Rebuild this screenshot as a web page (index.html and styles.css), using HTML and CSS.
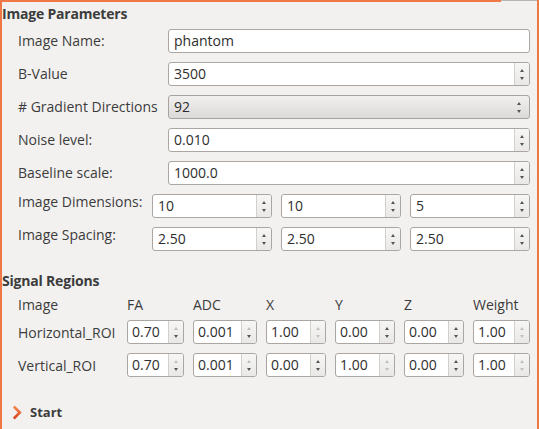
FILE: index.html
```html
<!DOCTYPE html>
<html>
<head>
<meta charset="utf-8">
<link rel="stylesheet" href="styles.css">
</head>
<body>
<div class="frame">
  <div class="topline"><span class="top-orange"></span><span class="top-gray"></span></div>
  <div class="content">
    <div class="section-title first">Image Parameters</div>
    <div class="form">
      <div class="row">
        <div class="lbl">Image Name:</div>
        <div class="field"><span class="val">phantom</span></div>
      </div>
      <div class="row">
        <div class="lbl">B-Value</div>
        <div class="field"><span class="val">3500</span><span class="btns"><i class="up"></i><i class="dn"></i></span></div>
      </div>
      <div class="row">
        <div class="lbl">#&nbsp;Gradient Directions</div>
        <div class="field combo"><span class="val">92</span><span class="cbtns"><i class="up"></i><i class="dn"></i></span></div>
      </div>
      <div class="row">
        <div class="lbl">Noise level:</div>
        <div class="field"><span class="val">0.010</span><span class="btns"><i class="up"></i><i class="dn"></i></span></div>
      </div>
      <div class="row">
        <div class="lbl">Baseline scale:</div>
        <div class="field"><span class="val">1000.0</span><span class="btns"><i class="up"></i><i class="dn"></i></span></div>
      </div>
      <div class="row triple">
        <div class="lbl top">Image Dimensions:</div>
        <div class="field"><span class="val">10</span><span class="btns"><i class="up"></i><i class="dn"></i></span></div>
        <div class="field"><span class="val">10</span><span class="btns"><i class="up"></i><i class="dn"></i></span></div>
        <div class="field"><span class="val">5</span><span class="btns"><i class="up"></i><i class="dn"></i></span></div>
      </div>
      <div class="row triple">
        <div class="lbl top">Image Spacing:</div>
        <div class="field"><span class="val">2.50</span><span class="btns"><i class="up"></i><i class="dn"></i></span></div>
        <div class="field"><span class="val">2.50</span><span class="btns"><i class="up"></i><i class="dn"></i></span></div>
        <div class="field"><span class="val">2.50</span><span class="btns"><i class="up"></i><i class="dn"></i></span></div>
      </div>
    </div>

    <div class="section-title second">Signal Regions</div>
    <div class="regions">
      <div class="grid head">
        <div>Image</div><div>FA</div><div>ADC</div><div>X</div><div>Y</div><div>Z</div><div>Weight</div>
      </div>
      <div class="grid">
        <div class="rlbl">Horizontal_ROI</div>
        <div class="field sm"><span class="val">0.70</span><span class="btns"><i class="up off"></i><i class="dn"></i></span></div>
        <div class="field sm"><span class="val">0.001</span><span class="btns"><i class="up off"></i><i class="dn"></i></span></div>
        <div class="field sm"><span class="val">1.00</span><span class="btns"><i class="up off"></i><i class="dn off"></i></span></div>
        <div class="field sm"><span class="val">0.00</span><span class="btns"><i class="up"></i><i class="dn"></i></span></div>
        <div class="field sm"><span class="val">0.00</span><span class="btns"><i class="up"></i><i class="dn"></i></span></div>
        <div class="field sm"><span class="val">1.00</span><span class="btns"><i class="up off"></i><i class="dn off"></i></span></div>
      </div>
      <div class="grid">
        <div class="rlbl">Vertical_ROI</div>
        <div class="field sm"><span class="val">0.70</span><span class="btns"><i class="up off"></i><i class="dn"></i></span></div>
        <div class="field sm"><span class="val">0.001</span><span class="btns"><i class="up off"></i><i class="dn"></i></span></div>
        <div class="field sm"><span class="val">0.00</span><span class="btns"><i class="up"></i><i class="dn"></i></span></div>
        <div class="field sm"><span class="val">1.00</span><span class="btns"><i class="up off"></i><i class="dn off"></i></span></div>
        <div class="field sm"><span class="val">0.00</span><span class="btns"><i class="up"></i><i class="dn"></i></span></div>
        <div class="field sm"><span class="val">1.00</span><span class="btns"><i class="up off"></i><i class="dn off"></i></span></div>
      </div>
    </div>

    <div class="start">
      <svg class="chev" width="10" height="15" viewBox="0 0 10 15">
        <defs>
          <linearGradient id="cg" x1="0" y1="0" x2="0" y2="1">
            <stop offset="0" stop-color="#f5894f"/>
            <stop offset="1" stop-color="#d9441c"/>
          </linearGradient>
        </defs>
        <polyline points="1.8,1.5 7.8,7.5 1.8,13.5" fill="none" stroke="url(#cg)" stroke-width="2.6" stroke-linejoin="miter"/>
      </svg>
      <span class="start-label">Start</span>
    </div>
  </div>
</div>
</body>
</html>
```

FILE: styles.css
```css
html, body {
  margin: 0;
  padding: 0;
}
body {
  width: 539px;
  height: 429px;
  overflow: hidden;
  background: #f2f1f0;
  font-family: "Open Sans", "DejaVu Sans", sans-serif;
  font-size: 14px;
  color: #3c3c3c;
}
.frame {
  box-sizing: border-box;
  width: 539px;
  height: 429px;
  border-left: 2px solid #f07846;
  border-right: 2px solid #f07846;
  display: flex;
  flex-direction: column;
}
.topline {
  display: flex;
  height: 2px;
  flex: none;
}
.top-orange {
  width: 499px;
  background: #f07846;
}
.top-gray {
  flex: 1;
  height: 1px;
  background: #b9b5b1;
}
.content {
  flex: 1;
  display: flex;
  flex-direction: column;
}
.section-title {
  font-weight: 700;
  font-size: 14px;
  line-height: 18px;
  color: #3c3c3c;
  letter-spacing: -0.2px;
}
.section-title.first {
  margin-top: 3px;
}
.section-title.second {
  margin-top: 21px;
}
.form {
  display: flex;
  flex-direction: column;
  gap: 9px;
  padding: 6px 7px 0 16px;
}
.row {
  display: flex;
  align-items: center;
  height: 24px;
}
.lbl {
  width: 150px;
  flex: none;
  white-space: nowrap;
  line-height: 18px;
}
.row.triple {
  gap: 9px;
}
.row.triple .lbl {
  width: 125px;
}
.lbl.top {
  align-self: flex-start;
  line-height: 16px;
}
.row.triple .field {
  width: 120px;
  flex: none;
}
.field {
  flex: 1;
  box-sizing: border-box;
  height: 24px;
  display: flex;
  border: 1px solid #aba6a1;
  border-radius: 3px;
  background: #fff;
  overflow: hidden;
  color: #2e2e2e;
}
.val {
  flex: 1;
  padding-left: 5px;
  line-height: 22px;
  white-space: nowrap;
  overflow: hidden;
}
.btns {
  width: 15px;
  flex: none;
  border-left: 1px solid #d3cfcb;
  background: linear-gradient(#f6f6f5, #e9e8e6);
  display: flex;
  flex-direction: column;
  align-items: center;
  justify-content: space-between;
  padding: 6px 0 5px;
  box-sizing: border-box;
}
.combo {
  background: linear-gradient(#f1f0ef, #dcdad8);
  border-color: #a8a39e;
}
.cbtns {
  width: 20px;
  flex: none;
  display: flex;
  flex-direction: column;
  align-items: center;
  justify-content: space-between;
  padding: 6px 0 5px;
  box-sizing: border-box;
}
.up, .dn {
  display: block;
  width: 0;
  height: 0;
  border-left: 2.5px solid transparent;
  border-right: 2.5px solid transparent;
}
.up {
  border-bottom: 3px solid #555;
}
.dn {
  border-top: 3px solid #555;
}
.up.off { border-bottom-color: #c2c0be; }
.dn.off { border-top-color: #c2c0be; }

.regions {
  padding: 5px 7px 0 16px;
  display: flex;
  flex-direction: column;
}
.grid {
  display: grid;
  grid-template-columns: 100px 57px 64px 60px 60px 60px 57px;
  column-gap: 9px;
  align-items: center;
  height: 24px;
  margin-bottom: 9px;
}
.grid.head {
  height: 20px;
  margin-bottom: 5px;
  line-height: 20px;
}
.rlbl {
  white-space: nowrap;
}
.field.sm .val {
  padding-left: 4px;
}
.start {
  margin-top: 18px;
  display: flex;
  align-items: center;
  padding-left: 10px;
  height: 16px;
}
.chev {
  display: block;
}
.start-label {
  margin-left: 8px;
  font-weight: 700;
  font-size: 13px;
  color: #3c3c3c;
}
```
